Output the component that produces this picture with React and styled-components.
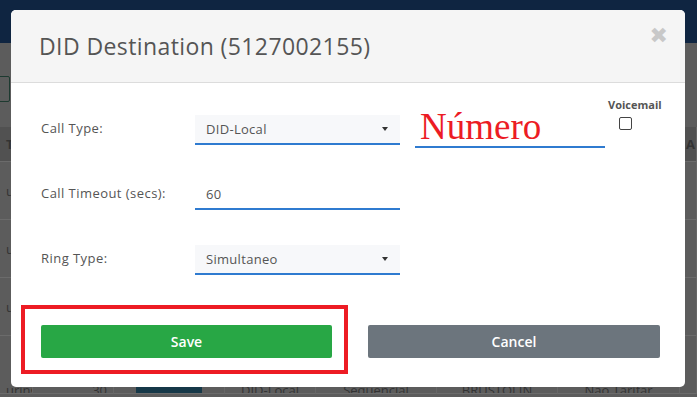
import { createGlobalStyle, styled } from "styled-components";

const GlobalStyle = createGlobalStyle`
    html, body {
        margin: 0;
        padding: 0;
        width: 697px;
        height: 397px;
        overflow: hidden;
        font-family: "Open Sans", "Liberation Sans", sans-serif;
    }
`

const Page = styled.div`
    position: relative;
    width: 697px;
    height: 397px;
    overflow: hidden;
    background-color: #5c5c5c;
    display: flex;
    flex-direction: column;
`

const TopBar = styled.div`
    height: 43px;
    background-color: #0f2541;
    flex-shrink: 0;
`

const Toolbar = styled.div`
    height: 84px;
    flex-shrink: 0;
    display: flex;
    align-items: center;
    padding-top: 8px;
    box-sizing: border-box;
`

const GhostButton = styled.div`
    width: 20px;
    height: 24px;
    margin-left: -12px;
    border: 1px solid #1d3a30;
    border-radius: 2px;
`

const Table = styled.div`
    display: grid;
    grid-template-columns: 33px 81px 111px 91px 121px 121px 122px 1fr;
    font-size: 13px;
    color: #333;
`

const Cell = styled.div`
    height: ${({ $head }) => ($head ? "35px" : "58px")};
    background-color: ${({ $head }) => ($head ? "#515151" : "transparent")};
    border-bottom: 1px solid #6b6b6b;
    border-right: 1px solid #666;
    display: flex;
    align-items: ${({ $low }) => ($low ? "flex-end" : "center")};
    justify-content: ${({ $align }) => $align || "flex-start"};
    padding: 0 6px;
    box-sizing: border-box;
    overflow: hidden;
    white-space: nowrap;
    font-weight: ${({ $head }) => ($head ? 700 : 400)};
`

const LowText = styled.span`
    line-height: 1;
    margin-bottom: -4px;
`

const Teal = styled.div`
    width: 66px;
    height: 30px;
    margin-top: 40px;
    background-color: #163848;
`

const Modal = styled.div`
    position: absolute;
    left: 11px;
    top: 10px;
    width: 674px;
    height: 377px;
    background-color: #fff;
    border-radius: 5px;
    overflow: hidden;
    display: flex;
    flex-direction: column;
`

const Header = styled.div`
    height: 73px;
    flex-shrink: 0;
    background-color: #f5f5f5;
    border-bottom: 1px solid #dcdcdc;
    box-sizing: border-box;
    display: flex;
    align-items: center;
    justify-content: space-between;
    padding: 0 17px 0 28px;
`

const Title = styled.h2`
    margin: 0;
    font-size: 23px;
    font-weight: 400;
    letter-spacing: 0.4px;
    color: #555;
`

const Close = styled.span`
    align-self: flex-start;
    margin-top: 15px;
    font-family: "DejaVu Sans", sans-serif;
    font-size: 22px;
    font-weight: 700;
    line-height: 1;
    color: #c8c8c8;
`

const Body = styled.div`
    padding: 18px 30px 0 30px;
    display: flex;
    flex-direction: column;
`

const Row = styled.div`
    display: grid;
    grid-template-columns: 154px 205px 205px 1fr;
    height: 65px;
    align-items: start;
`

const Label = styled.div`
    font-size: 13px;
    letter-spacing: 0.45px;
    color: #555;
    padding-top: 18px;
`

const Field = styled.div`
    margin-top: 14px;
    height: 30px;
    box-sizing: border-box;
    background-color: ${({ $filled }) => ($filled ? "#f7f8fa" : "#fff")};
    border-bottom: 2px solid #2f7bd0;
    display: flex;
    align-items: center;
    justify-content: space-between;
    padding: 0 12px 0 11px;
    font-size: 13px;
    letter-spacing: 0.3px;
    color: #555;
`

const Caret = styled.span`
    width: 0;
    height: 0;
    border-left: 3.5px solid transparent;
    border-right: 3.5px solid transparent;
    border-top: 4px solid #333;
`

const NumberField = styled.div`
    margin-left: 15px;
    height: 44px;
    border-bottom: 2px solid #2f7bd0;
    display: flex;
    align-items: flex-end;
    padding-left: 5px;
    padding-bottom: 1px;
    font-family: "Liberation Serif", serif;
    font-size: 37px;
    line-height: 1;
    color: #ec1c24;
`

const Voicemail = styled.div`
    display: flex;
    flex-direction: column;
    align-items: flex-start;
    width: 56px;
    margin-left: 3px;
    margin-top: -4px;
    font-size: 11px;
    font-weight: 700;
    color: #555;
    gap: 5px;
`

const Check = styled.span`
    width: 11px;
    height: 11px;
    margin-left: 11px;
    border: 1px solid #444;
    border-radius: 2px;
`

const Footer = styled.div`
    position: relative;
    display: grid;
    grid-template-columns: 291px 292px;
    column-gap: 36px;
    padding: 29px 0 0 30px;
`

const Button = styled.div`
    height: 33px;
    border-radius: 2px;
    background-color: ${({ $variant }) => ($variant === "save" ? "#28a745" : "#6c757d")};
    color: #fff;
    font-size: 14px;
    font-weight: 600;
    display: flex;
    align-items: center;
    justify-content: center;
`

const Highlight = styled.div`
    position: absolute;
    left: 10px;
    top: 9px;
    width: 327px;
    height: 69px;
    box-sizing: border-box;
    border: 4px solid #ed1c24;
`

const rows = [
    ["uri", "", "", "", "", "", "", ""],
    ["uri", "", "", "", "", "", "", ""],
    ["uri", "", "", "", "", "", "", ""],
]

const App = () => {
    return (
        <>
            <GlobalStyle />
            <Page>
                <TopBar />
                <Toolbar>
                    <GhostButton />
                </Toolbar>
                <Table>
                    <Cell $head>Ty</Cell>
                    <Cell $head />
                    <Cell $head />
                    <Cell $head />
                    <Cell $head />
                    <Cell $head />
                    <Cell $head />
                    <Cell $head>A</Cell>
                    {rows.map((r, i) =>
                        r.map((c, j) => <Cell key={`${i}-${j}`}>{c}</Cell>)
                    )}
                    <Cell $low><LowText>uring</LowText></Cell>
                    <Cell $low $align="flex-end"><LowText>30</LowText></Cell>
                    <Cell $align="center"><Teal /></Cell>
                    <Cell $low $align="center"><LowText>DID-Local</LowText></Cell>
                    <Cell $low $align="center"><LowText>Sequencial</LowText></Cell>
                    <Cell $low $align="center"><LowText>BRUSTOLIN</LowText></Cell>
                    <Cell $low $align="center"><LowText>Não Tarifar</LowText></Cell>
                    <Cell />
                </Table>

                <Modal>
                    <Header>
                        <Title>DID Destination (5127002155)</Title>
                        <Close>✖</Close>
                    </Header>
                    <Body>
                        <Row>
                            <Label>Call Type:</Label>
                            <Field $filled>
                                DID-Local
                                <Caret />
                            </Field>
                            <NumberField>Número</NumberField>
                            <Voicemail>
                                Voicemail
                                <Check />
                            </Voicemail>
                        </Row>
                        <Row>
                            <Label>Call Timeout (secs):</Label>
                            <Field>60</Field>
                        </Row>
                        <Row>
                            <Label>Ring Type:</Label>
                            <Field $filled>
                                Simultaneo
                                <Caret />
                            </Field>
                        </Row>
                    </Body>
                    <Footer>
                        <Highlight />
                        <Button $variant="save">Save</Button>
                        <Button $variant="cancel">Cancel</Button>
                    </Footer>
                </Modal>
            </Page>
        </>
    );
};

export default App;
